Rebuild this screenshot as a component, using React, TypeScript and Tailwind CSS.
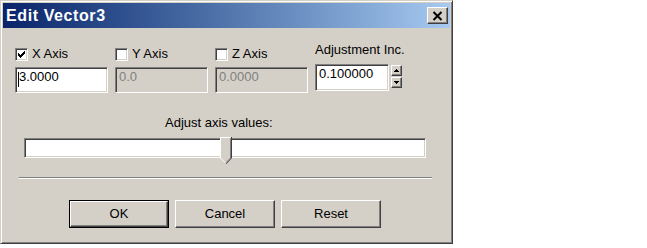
import React from "react";

const font = { fontFamily: '"Liberation Sans", Arial, sans-serif' };

// classic 7x7 check mark, one rect per run of pixels
const checkRuns: [number, number, number][] = [
  [6, 0, 1],
  [5, 1, 2],
  [0, 2, 1],
  [4, 2, 3],
  [0, 3, 2],
  [3, 3, 3],
  [0, 4, 5],
  [1, 5, 3],
  [2, 6, 1],
];

function CheckBox({ checked, label }: { checked?: boolean; label: string }) {
  return (
    <div className="flex h-[16px] items-center gap-[4px]">
      <div className="box-border flex h-[13px] w-[13px] items-center justify-center border border-t-[#808080] border-l-[#808080] border-b-white border-r-white bg-white shadow-[inset_1px_1px_0_#404040,inset_-1px_-1px_0_#d4d0c8]">
        {checked ? (
          <svg width="7" height="7" viewBox="0 0 7 7" shapeRendering="crispEdges">
            {checkRuns.map(([x, y, w], i) => (
              <rect key={i} x={x} y={y} width={w} height={1} fill="#000" />
            ))}
          </svg>
        ) : null}
      </div>
      <span className="text-[13px] leading-[16px] text-black">{label}</span>
    </div>
  );
}

function Field({
  value,
  disabled,
  caret,
  className,
}: {
  value: string;
  disabled?: boolean;
  caret?: boolean;
  className?: string;
}) {
  return (
    <div
      className={
        "relative box-border border border-t-[#808080] border-l-[#808080] border-b-white border-r-white pl-[3px] pt-[1px] text-[13px] leading-[16px] shadow-[inset_1px_1px_0_#404040,inset_-1px_-1px_0_#d4d0c8] " +
        (disabled ? "bg-[#d4d0c8] text-[#808080] " : "bg-white text-black ") +
        (className ?? "")
      }
    >
      {value}
      {caret ? <span className="absolute left-[2px] top-[4px] h-[15px] w-px bg-black" /> : null}
    </div>
  );
}

function Button({ children, isDefault }: { children: React.ReactNode; isDefault?: boolean }) {
  if (isDefault) {
    return (
      <button className="box-border h-[28px] w-[100px] border border-black bg-[#d4d0c8] p-0">
        <div className="box-border flex h-full w-full items-center justify-center border border-t-white border-l-white border-b-[#404040] border-r-[#404040] text-[13px] text-black shadow-[inset_-1px_-1px_0_#808080]">
          {children}
        </div>
      </button>
    );
  }
  return (
    <button className="box-border flex h-[28px] w-[100px] items-center justify-center border border-t-white border-l-white border-b-[#404040] border-r-[#404040] bg-[#d4d0c8] text-[13px] text-black shadow-[inset_-1px_-1px_0_#808080]">
      {children}
    </button>
  );
}

function SpinBtn({ up }: { up?: boolean }) {
  return (
    <div className="box-border flex h-[11px] w-[11px] items-center justify-center border border-t-white border-l-white border-b-[#404040] border-r-[#404040] bg-[#d4d0c8] shadow-[inset_-1px_-1px_0_#808080]">
      <svg width="5" height="3" viewBox="0 0 5 3" shapeRendering="crispEdges">
        {up ? (
          <path d="M2 0h1v1h1v1h1v1H0V2h1V1h1z" fill="#000" />
        ) : (
          <path d="M0 0h5v1H4v1H3v1H2V2H1V1H0z" fill="#000" />
        )}
      </svg>
    </div>
  );
}

function Thumb() {
  return (
    <svg width="12" height="28" viewBox="0 0 12 28" className="absolute left-[195px] top-[-2px]">
      <path d="M0 0H12V21L6 27L0 21Z" fill="#d4d0c8" />
      <path d="M0.5 21V0.5H11" stroke="#fff" fill="none" />
      <path d="M0.5 21L6 26.5" stroke="#fff" fill="none" />
      <path d="M10.5 1V21L6 25.5" stroke="#808080" fill="none" />
      <path d="M11.5 0V21L6 26.9" stroke="#404040" fill="none" />
    </svg>
  );
}

export default function App() {
  return (
    <div className="h-[248px] w-[647px] bg-white" style={font}>
      <div className="box-border w-[453px] border border-t-[#d4d0c8] border-l-[#d4d0c8] border-b-[#404040] border-r-[#404040] bg-[#d4d0c8] p-[2px] shadow-[inset_1px_1px_0_#fff,inset_-1px_-1px_0_#808080]">
        {/* title bar */}
        <div className="flex h-[25px] items-center justify-between bg-gradient-to-r from-[#0a246a] to-[#a6caf0] pl-[3px] pr-[2px]">
          <span className="text-[16px] font-bold leading-[18px] tracking-[0.6px] text-white">Edit Vector3</span>
          <div className="box-border flex h-[17px] w-[21px] items-center justify-center border border-t-white border-l-white border-b-[#404040] border-r-[#404040] bg-[#d4d0c8] shadow-[inset_-1px_-1px_0_#808080]">
            <svg width="11" height="10" viewBox="0 0 11 10">
              <path d="M1.5 1L9.5 9M9.5 1L1.5 9" stroke="#000" strokeWidth="2" />
            </svg>
          </div>
        </div>

        {/* body */}
        <div className="pb-[13px]">
          <div className="mt-[14px] flex items-start gap-[7px] pl-[12px]">
            <div className="flex w-[93px] flex-col pt-[4px]">
              <CheckBox checked label="X Axis" />
              <Field value="3.0000" caret className="mt-[5px] h-[26px] w-[93px]" />
            </div>
            <div className="flex w-[93px] flex-col pt-[4px]">
              <CheckBox label="Y Axis" />
              <Field value="0.0" disabled className="mt-[5px] h-[26px] w-[93px]" />
            </div>
            <div className="flex w-[93px] flex-col pt-[4px]">
              <CheckBox label="Z Axis" />
              <Field value="0.0000" disabled className="mt-[5px] h-[26px] w-[93px]" />
            </div>
            <div className="flex flex-col">
              <span className="text-[13px] leading-[16px] text-black">Adjustment Inc.</span>
              <div className="mt-[6px] flex items-start gap-[2px]">
                <Field value="0.100000" className="h-[27px] w-[74px]" />
                <div className="flex flex-col gap-px pt-px">
                  <SpinBtn up />
                  <SpinBtn />
                </div>
              </div>
            </div>
          </div>

          <div className="mt-[22px] pl-[162px] text-[13px] leading-[16px] text-black">
            Adjust axis values:
          </div>

          <div className="relative ml-[21px] mt-[7px] box-border h-[20px] w-[402px] border border-t-[#808080] border-l-[#808080] border-b-white border-r-white bg-white shadow-[inset_1px_1px_0_#404040,inset_-1px_-1px_0_#d4d0c8]">
            <Thumb />
          </div>

          <div className="ml-[16px] mt-[19px] h-[2px] w-[413px] border-t border-t-[#808080] border-b border-b-white" />

          <div className="ml-[66px] mt-[21px] flex gap-[6px]">
            <Button isDefault>OK</Button>
            <Button>Cancel</Button>
            <Button>Reset</Button>
          </div>
        </div>
      </div>
    </div>
  );
}
